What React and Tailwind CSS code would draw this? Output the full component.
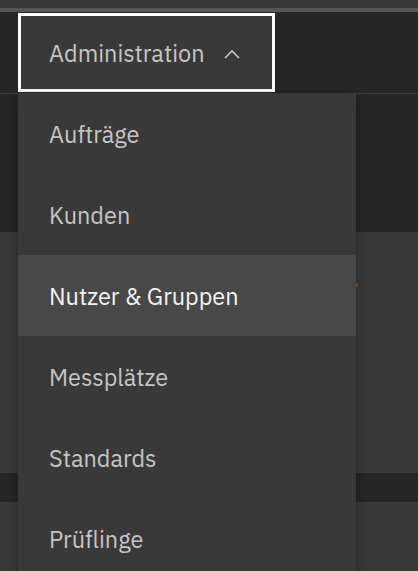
import React from 'react'

const items = ['Aufträge', 'Kunden', 'Nutzer & Gruppen', 'Messplätze', 'Standards', 'Prüflinge']

const ChevronUp = () => (
  <svg width="16" height="10" viewBox="0 0 16 10" fill="none" className="ml-[19px]">
    <polyline points="1,9 8,2 15,9" stroke="#c6c6c6" strokeWidth="1.6" />
  </svg>
)

const App = () => {
  return (
    <div
      className="relative h-[571px] w-[418px] overflow-hidden bg-[#393939] flex flex-col"
      style={{ fontFamily: '"IBM Plex Sans", Roboto, "Noto Sans", sans-serif' }}
    >
      {/* top strip */}
      <div className="h-[8px] bg-[#393939]" />
      <div className="h-[4px] bg-[#565656]" />

      {/* header */}
      <header className="h-[82px] bg-[#262626] border-b border-[#3d3d3d] flex items-start pl-[18px] pt-px">
        <button className="h-[79px] flex items-center border-[3px] border-white bg-[#393939] pl-[28px] pr-[32px] pt-[2px] text-[23.5px] text-[#c6c6c6]">
          Administration
          <ChevronUp />
        </button>
      </header>

      {/* page content behind the menu */}
      <div className="h-[138px] bg-[#262626]" />
      <div className="h-[241px] bg-[#393939] pl-[355px] pt-[51px]">
        <div className="w-[3px] h-[4px] bg-[#8a4a20]" />
      </div>
      <div className="h-[29px] bg-[#262626]" />
      <div className="flex-1 bg-[#393939]" />

      {/* dropdown menu */}
      <ul className="absolute left-[18px] top-[93px] w-[338px] bg-[#393939] shadow-[0_3px_10px_rgba(0,0,0,0.35)]">
        {items.map((item) => (
          <li
            key={item}
            className={
              item === 'Nutzer & Gruppen'
                ? 'h-[81px] flex items-center pl-[31px] pt-[2px] text-[23.5px] bg-[#484848] text-[#f4f4f4]'
                : 'h-[81px] flex items-center pl-[31px] pt-[2px] text-[23.5px] text-[#c6c6c6]'
            }
          >
            {item}
          </li>
        ))}
      </ul>
    </div>
  )
}

export default App
